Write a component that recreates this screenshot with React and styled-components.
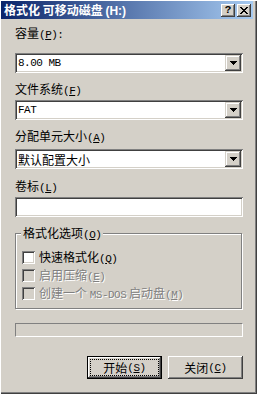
import React from 'react';
import styled, { createGlobalStyle, css } from 'styled-components';

const CJK = `"Noto Sans CJK SC", "Liberation Sans", sans-serif`;
const MONO = `"Liberation Mono", "DejaVu Sans Mono", monospace`;

const GlobalStyle = createGlobalStyle`
  html, body {
    margin: 0;
    padding: 0;
    background: #d4d0c8;
  }
  body {
    font-family: ${CJK};
    font-size: 12px;
  }
`;

const Window = styled.div`
  width: 257px;
  height: 394px;
  box-sizing: border-box;
  display: flex;
  flex-direction: column;
  background: #d4d0c8;
  border-top: 1px solid #fff;
  border-left: 1px solid #fff;
  padding: 0 4px 3px 0;
  box-shadow: inset -1px -1px 0 #404040, inset -2px -2px 0 #808080;
  font-family: ${CJK};
  font-size: 12px;
  color: #000;
`;

const TitleBar = styled.div`
  height: 18px;
  display: flex;
  align-items: center;
  padding: 0 2px 0 3px;
  background: linear-gradient(to right, #0a246a, #a6caf0);
`;

const Title = styled.div`
  flex: 1;
  color: #fff;
  font-weight: bold;
  line-height: 14px;
  white-space: nowrap;
`;

const TitleLatin = styled.span`
  font-family: "Liberation Sans", sans-serif;
  font-size: 12px;
`;

const CaptionButtons = styled.div`
  display: flex;
  gap: 2px;
`;

const CaptionButton = styled.div`
  width: 14px;
  height: 13px;
  box-sizing: border-box;
  display: flex;
  align-items: center;
  justify-content: center;
  background: #d4d0c8;
  box-shadow: inset -1px -1px 0 #404040, inset 1px 1px 0 #fff,
    inset -2px -2px 0 #808080;
  font-family: ${MONO};
  font-weight: bold;
  font-size: 11px;
  line-height: 11px;
`;

const Body = styled.div`
  flex: 1;
  display: flex;
  flex-direction: column;
  padding: 0 10px 0 14px;
`;

const Label = styled.div`
  margin-top: ${p => p.$mt}px;
  line-height: 14px;
  white-space: nowrap;
  ${p =>
    p.$disabled &&
    css`
      color: #808080;
      text-shadow: 1px 1px 0 #fff;
    `}
`;

const Latin = styled.span`
  font-family: ${MONO};
  font-size: 11px;
  letter-spacing: -0.5px;
`;

const Sunken = styled.div`
  margin-top: ${p => p.$mt}px;
  height: 20px;
  box-sizing: border-box;
  display: flex;
  align-items: stretch;
  padding: 2px;
  background: #fff;
  box-shadow: inset 1px 1px 0 #808080, inset -1px -1px 0 #fff,
    inset 2px 2px 0 #404040, inset -2px -2px 0 #d4d0c8;
`;

const ComboValue = styled.div`
  flex: 1;
  display: flex;
  align-items: center;
  padding-left: 1px;
  font-family: ${p => (p.$mono ? MONO : CJK)};
  font-size: ${p => (p.$mono ? 11 : 12)}px;
  letter-spacing: ${p => (p.$mono ? '-0.5px' : 0)};
  white-space: nowrap;
`;

const DropButton = styled.div`
  width: 16px;
  display: flex;
  align-items: center;
  justify-content: center;
  background: #d4d0c8;
  box-shadow: inset -1px -1px 0 #404040, inset 1px 1px 0 #d4d0c8,
    inset -2px -2px 0 #808080, inset 2px 2px 0 #fff;
`;

const GroupBox = styled.div`
  position: relative;
  margin-top: ${p => p.$mt}px;
  height: 76px;
  width: 227px;
  border: 1px solid #808080;
  box-shadow: inset 1px 1px 0 #fff, 1px 1px 0 #fff;
  padding: 17px 0 0 6px;
  box-sizing: border-box;
  display: flex;
  flex-direction: column;
  gap: 5px;
`;

const Legend = styled.div`
  position: absolute;
  top: -8px;
  left: 5px;
  padding: 0 2px;
  line-height: 14px;
  background: #d4d0c8;
`;

const CheckRow = styled.div`
  display: flex;
  align-items: center;
  gap: 4px;
  height: 13px;
`;

const CheckBox = styled.div`
  width: 13px;
  height: 13px;
  box-sizing: border-box;
  flex: none;
  background: ${p => (p.$disabled ? '#d4d0c8' : '#fff')};
  box-shadow: inset 1px 1px 0 #808080, inset -1px -1px 0 #fff,
    inset 2px 2px 0 #404040, inset -2px -2px 0 #d4d0c8;
`;

const Progress = styled.div`
  margin-top: ${p => p.$mt}px;
  height: 14px;
  box-sizing: border-box;
  border: 1px solid;
  border-color: #808080 #fff #fff #808080;
`;

const ButtonRow = styled.div`
  margin-top: auto;
  margin-bottom: 12px;
  display: flex;
  justify-content: flex-end;
  gap: 6px;
`;

const Button = styled.div`
  width: 75px;
  height: 23px;
  box-sizing: border-box;
  display: flex;
  padding: 4px;
  background: #d4d0c8;
  box-shadow: inset -1px -1px 0 #404040, inset 1px 1px 0 #fff,
    inset -2px -2px 0 #808080;
  ${p =>
    p.$default &&
    css`
      border: 1px solid #000;
      padding: 3px;
    `}
`;

const ButtonFace = styled.div`
  flex: 1;
  display: flex;
  align-items: center;
  justify-content: center;
  line-height: 14px;
  outline: ${p => (p.$focus ? '1px dotted #000' : 'none')};
`;

const Key = ({ k }) => (
  <Latin>
    (<u>{k}</u>)
  </Latin>
);

function Combo({ mt, value, mono }) {
  return (
    <Sunken $mt={mt}>
      <ComboValue $mono={mono}>{value}</ComboValue>
      <DropButton>
        <svg width="7" height="4" viewBox="0 0 7 4" shapeRendering="crispEdges">
          <path d="M0 0h7v1H0zM1 1h5v1H1zM2 2h3v1H2zM3 3h1v1H3z" fill="#000" />
        </svg>
      </DropButton>
    </Sunken>
  );
}

function Check({ disabled, children }) {
  return (
    <CheckRow>
      <CheckBox $disabled={disabled} />
      <Label $mt={0} $disabled={disabled}>
        {children}
      </Label>
    </CheckRow>
  );
}

export default function App() {
  return (
    <>
      <GlobalStyle />
      <Window>
        <TitleBar>
          <Title>
            格式化 可移动磁盘 <TitleLatin>(H:)</TitleLatin>
          </Title>
          <CaptionButtons>
            <CaptionButton>?</CaptionButton>
            <CaptionButton>
              <svg width="8" height="7" viewBox="0 0 8 7" shapeRendering="crispEdges">
                <path
                  d="M0 0h2v1H0zM6 0h2v1H6zM1 1h2v1H1zM5 1h2v1H5zM2 2h4v1H2zM3 3h2v1H3zM2 4h4v1H2zM1 5h2v1H1zM5 5h2v1H5zM0 6h2v1H0zM6 6h2v1H6z"
                  fill="#000"
                />
              </svg>
            </CaptionButton>
          </CaptionButtons>
        </TitleBar>

        <Body>
          <Label $mt={7}>
            容量<Key k="P" />
            <Latin>:</Latin>
          </Label>
          <Combo mt={11} value="8.00 MB" mono />

          <Label $mt={9}>
            文件系统<Key k="F" />
          </Label>
          <Combo mt={2} value="FAT" mono />

          <Label $mt={9}>
            分配单元大小<Key k="A" />
          </Label>
          <Combo mt={4} value="默认配置大小" />

          <Label $mt={10}>
            卷标<Key k="L" />
          </Label>
          <Sunken $mt={2} />

          <GroupBox $mt={16}>
            <Legend>
              格式化选项<Key k="O" />
            </Legend>
            <Check>
              快速格式化<Key k="Q" />
            </Check>
            <Check disabled>
              启用压缩<Key k="E" />
            </Check>
            <Check disabled>
              创建一个 <Latin>MS-DOS</Latin> 启动盘<Key k="M" />
            </Check>
          </GroupBox>

          <Progress $mt={14} />

          <ButtonRow>
            <Button $default>
              <ButtonFace $focus>
                开始<Key k="S" />
              </ButtonFace>
            </Button>
            <Button>
              <ButtonFace>
                关闭<Key k="C" />
              </ButtonFace>
            </Button>
          </ButtonRow>
        </Body>
      </Window>
    </>
  );
}
